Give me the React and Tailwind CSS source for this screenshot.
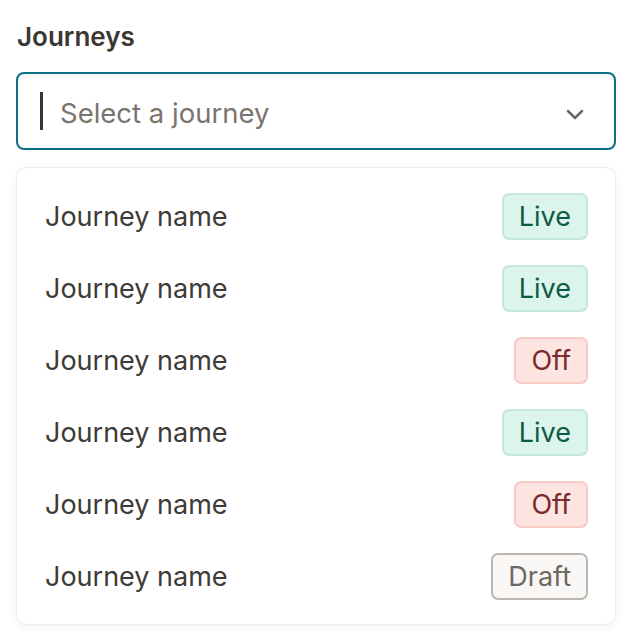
import React from "react";

const journeys = [
  { name: "Journey name", status: "Live" },
  { name: "Journey name", status: "Live" },
  { name: "Journey name", status: "Off" },
  { name: "Journey name", status: "Live" },
  { name: "Journey name", status: "Off" },
  { name: "Journey name", status: "Draft" },
];

const badgeStyles = {
  Live: "bg-[#dbf4ec] border-[#c3e8da] text-[#0d5a45]",
  Off: "bg-[#fee4e0] border-[#f8cbc5] text-[#772b2c]",
  Draft: "bg-[#f8f7f5] border-[#bdb7b2] text-[#6e6863]",
};

function StatusBadge({ status }) {
  return (
    <span
      className={`inline-flex h-[47px] items-center rounded-[7px] border-2 px-[15px] pt-[1px] text-[27px] leading-none ${badgeStyles[status]}`}
    >
      {status}
    </span>
  );
}

export default function App() {
  return (
    <div className="h-[640px] w-[632px] bg-white px-4 pt-[21px] font-['Inter',sans-serif]">
      <h2 className="pl-[1px] text-[26px] font-semibold leading-[32px] text-[#3b3632]">Journeys</h2>

      <div className="mt-[19px] flex h-[78px] items-center rounded-[8px] border-2 border-[#0b6f86] bg-white pl-[22px] pr-[27px] shadow-[inset_0_2px_6px_rgba(0,0,0,0.05)]">
        <span className="h-[38px] w-[3px] bg-[#3b3632]" />
        <span className="ml-[17px] flex-1 pt-[5px] text-[27.5px] text-[#7b746e]">Select a journey</span>
        <svg className="mt-[5px]" width="24" height="24" viewBox="0 0 24 24" fill="none" stroke="#6e6863" strokeWidth="2.5" strokeLinecap="round" strokeLinejoin="round">
          <path d="M5 9l7 7 7-7" />
        </svg>
      </div>

      <div className="mt-[17px] rounded-[11px] border border-[#efedeb] bg-white py-3 shadow-[0_2px_8px_rgba(0,0,0,0.06)]">
        {journeys.map((j, i) => (
          <div key={i} className="flex h-[72px] items-center justify-between pl-[28px] pr-[27px]">
            <span className="pt-[2px] text-[27px] text-[#3e3a36]">{j.name}</span>
            <StatusBadge status={j.status} />
          </div>
        ))}
      </div>
    </div>
  );
}
